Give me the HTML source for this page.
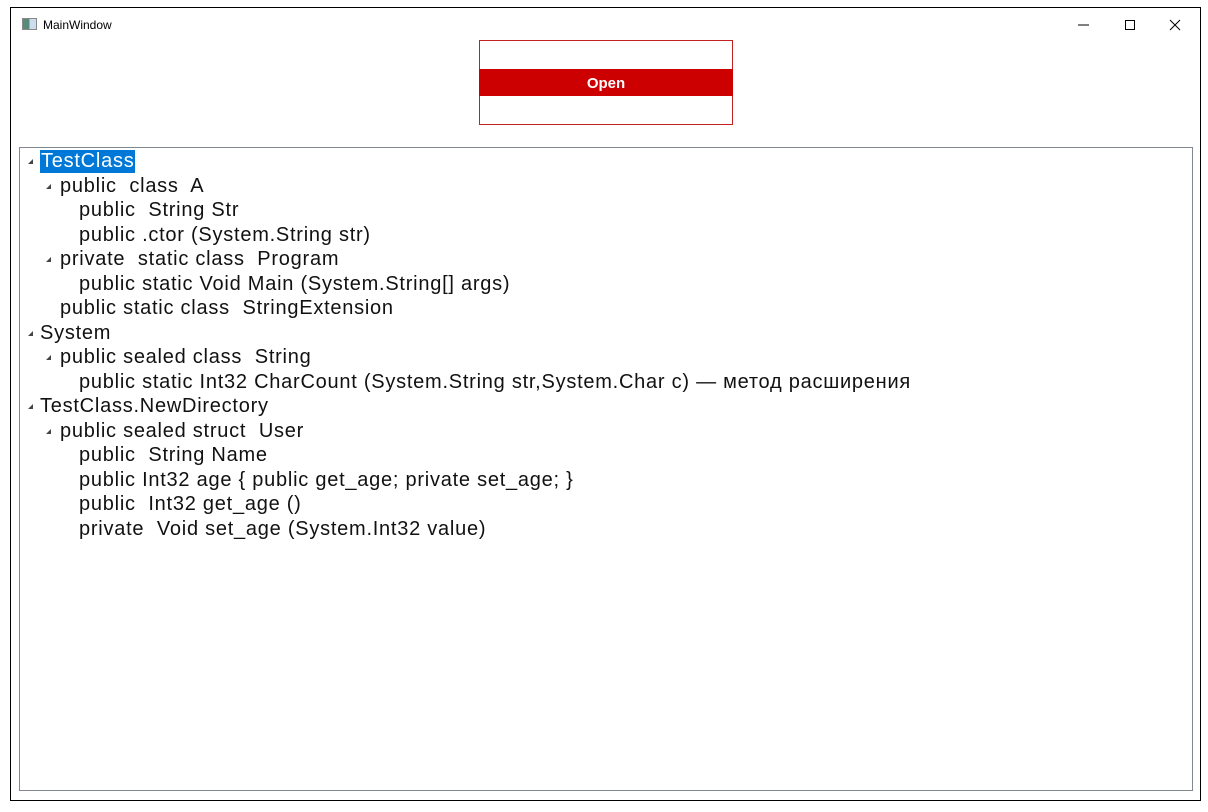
<!DOCTYPE html>
<html><head><meta charset="utf-8"><style>
html,body{margin:0;padding:0;background:#fff;width:1208px;height:812px;overflow:hidden}
#win{position:absolute;left:10px;top:7px;width:1191px;height:794px;border:1px solid #000;box-sizing:border-box;background:#fff}
.title{position:absolute;left:43px;top:18px;font:12px "Liberation Sans",sans-serif;color:#000}
.ico{position:absolute;left:22px;top:18px;width:13px;height:10px;border:1px solid #888;background:linear-gradient(90deg,#5a8a7a 50%,#cde 50%)}
.btn{position:absolute;left:479px;top:40px;width:254px;height:85px;border:1px solid #c42020;box-sizing:border-box}
.band{position:absolute;left:479px;top:69px;width:254px;height:27px;background:#cc0000;color:#fff;font:bold 15px "Liberation Sans",sans-serif;text-align:center;line-height:29px}
.tree{position:absolute;left:19px;top:147px;width:1174px;height:644px;border:1px solid #828790;box-sizing:border-box}
.r{position:absolute;font:20px "Liberation Sans","Noto Sans CJK SC",sans-serif;letter-spacing:0.75px;color:#111;white-space:pre;line-height:23px}
.a{position:absolute;width:0;height:0;border-left:5px solid transparent;border-bottom:5px solid #444}
.sel{background:#0078d7;color:#fff}
</style></head><body>
<div id="win"></div>
<div class="ico"></div><div class="title">MainWindow</div>
<svg style="position:absolute;left:1075px;top:17px" width="115" height="16">
<line x1="3" y1="8" x2="14" y2="8" stroke="#000"/>
<rect x="50.5" y="3.5" width="9" height="9" fill="none" stroke="#000"/>
<path d="M95 3L105 13M105 3L95 13" stroke="#000"/>
</svg>
<div class="btn"></div><div class="band">Open</div>
<div class="tree"></div>
<div class="a" style="left:28px;top:159px"></div>
<div class="r sel" style="left:40px;top:150px;padding:0 1px">TestClass</div>
<div class="a" style="left:46px;top:184px"></div>
<div class="r" style="left:60px;top:175px">public  class  A</div>
<div class="r" style="left:79px;top:199px">public  String Str</div>
<div class="r" style="left:79px;top:224px">public .ctor (System.String str)</div>
<div class="a" style="left:46px;top:257px"></div>
<div class="r" style="left:60px;top:248px">private  static class  Program</div>
<div class="r" style="left:79px;top:273px">public static Void Main (System.String[] args)</div>
<div class="r" style="left:60px;top:297px">public static class  StringExtension</div>
<div class="a" style="left:28px;top:331px"></div>
<div class="r" style="left:40px;top:322px">System</div>
<div class="a" style="left:46px;top:355px"></div>
<div class="r" style="left:60px;top:346px">public sealed class  String</div>
<div class="r" style="left:79px;top:371px">public static Int32 CharCount (System.String str,System.Char c) — метод расширения</div>
<div class="a" style="left:28px;top:404px"></div>
<div class="r" style="left:40px;top:395px">TestClass.NewDirectory</div>
<div class="a" style="left:46px;top:429px"></div>
<div class="r" style="left:60px;top:420px">public sealed struct  User</div>
<div class="r" style="left:79px;top:444px">public  String Name</div>
<div class="r" style="left:79px;top:469px">public Int32 age { public get_age; private set_age; }</div>
<div class="r" style="left:79px;top:493px">public  Int32 get_age ()</div>
<div class="r" style="left:79px;top:518px">private  Void set_age (System.Int32 value)</div>
</body></html>
